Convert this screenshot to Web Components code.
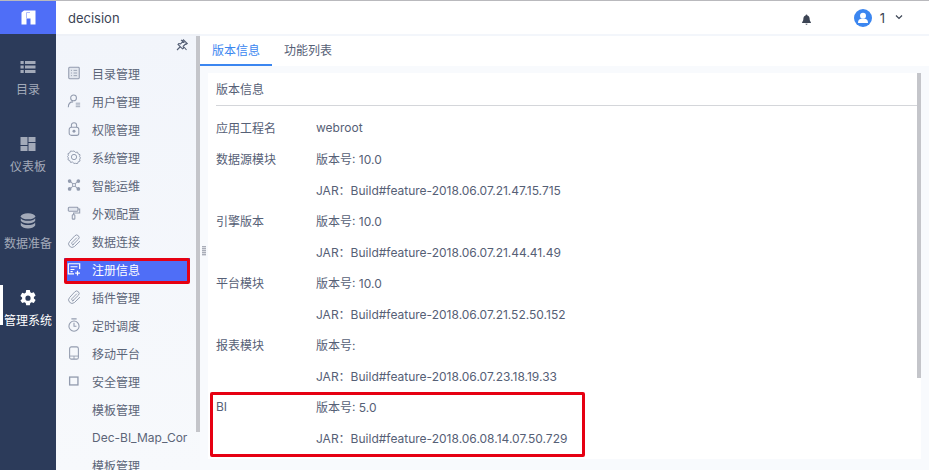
<!DOCTYPE html>
<html lang="zh">
<head>
<meta charset="utf-8">
<title>decision</title>
<style>
  html, body { margin: 0; height: 100%; overflow: hidden; }
  body { font: 12px Inter, "Noto Sans CJK SC", sans-serif; color: #566076; background: #fff; }
</style>
</head>
<body>
<app-shell>
  <top-bar slot="top"></top-bar>
  <nav-rail slot="rail">
    <rail-item icon="list" style="--top:25px">目录</rail-item>
    <rail-item icon="dash">仪表板</rail-item>
    <rail-item icon="db">数据准备</rail-item>
    <rail-item icon="gear" active>管理系统</rail-item>
  </nav-rail>
  <side-menu slot="menu">
    <menu-item icon="book">目录管理</menu-item>
    <menu-item icon="user">用户管理</menu-item>
    <menu-item icon="lock">权限管理</menu-item>
    <menu-item icon="cog">系统管理</menu-item>
    <menu-item icon="nodes">智能运维</menu-item>
    <menu-item icon="roller">外观配置</menu-item>
    <menu-item icon="clip">数据连接</menu-item>
    <menu-item icon="reg" active>注册信息</menu-item>
    <menu-item icon="clip">插件管理</menu-item>
    <menu-item icon="timer">定时调度</menu-item>
    <menu-item icon="phone">移动平台</menu-item>
    <menu-item icon="square">安全管理</menu-item>
    <menu-item>模板管理</menu-item>
    <menu-item>Dec-BI_Map_Cor</menu-item>
    <menu-item>模板管理</menu-item>
  </side-menu>
  <tab-bar slot="tabs"></tab-bar>
  <info-panel slot="panel" heading="版本信息">
    <info-row label="应用工程名">webroot</info-row>
    <info-row label="数据源模块">版本号: 10.0</info-row>
    <info-row>JAR：Build#feature-2018.06.07.21.47.15.715</info-row>
    <info-row label="引擎版本">版本号: 10.0</info-row>
    <info-row>JAR：Build#feature-2018.06.07.21.44.41.49</info-row>
    <info-row label="平台模块">版本号: 10.0</info-row>
    <info-row>JAR：Build#feature-2018.06.07.21.52.50.152</info-row>
    <info-row label="报表模块">版本号:</info-row>
    <info-row>JAR：Build#feature-2018.06.07.23.18.19.33</info-row>
    <info-row label="BI">版本号: 5.0</info-row>
    <info-row>JAR：Build#feature-2018.06.08.14.07.50.729</info-row>
  </info-panel>
  <drag-handle slot="marks" style="left:202px;top:246px"></drag-handle>
  <mark-box slot="marks" style="left:64px;top:258px;width:126px;height:26px"></mark-box>
  <mark-box slot="marks" style="left:210px;top:392px;width:375px;height:65px"></mark-box>
</app-shell>

<script>
// icon paths, all on a 16x16 box
const ICONS = {
  book: '<rect x="2" y="1.500" width="12" height="13" rx="1" fill="#e3e7ef" stroke="currentColor" stroke-width="1.200"/><path d="M4.500 5h1.200M4.500 8h1.200M4.500 11h1.200M7.500 5h4M7.500 8h4M7.500 11h4" stroke="currentColor"/>',
  user: '<circle cx="7.500" cy="4.500" r="3.300" fill="none" stroke="currentColor" stroke-width="1.200"/><path d="M1.500 15c0-3.500 2-6 5.500-6" fill="none" stroke="currentColor" stroke-width="1.200"/><path d="M10 10.500h5M10 12.500h5M10 14.500h5" stroke="currentColor"/>',
  lock: '<rect x="2.500" y="6" width="11" height="9.300" rx="2.500" fill="none" stroke="currentColor" stroke-width="1.200"/><path d="M5 6V3.800a3 3 0 0 1 6 0V6" fill="none" stroke="currentColor" stroke-width="1.200"/><circle cx="8" cy="10.500" r="1.700" fill="currentColor"/>',
  cog: '<path d="M8 .8l1.700 1.700 2.300-.3.800 2.100 2.100 1-.5 2.300 1.100 1.400-1.100 1.400.5 2.300-2.100.9-.8 2.200-2.300-.4L8 15.500l-1.700-1.600-2.300.4-.8-2.200-2.100-.9.500-2.300L.5 7.500l1.100-1.300-.5-2.200 2.100-1 .8-2.100 2.300.3z" transform="translate(0 .3) scale(1 .97)" fill="none" stroke="currentColor" stroke-width="1.100"/><circle cx="8" cy="8" r="3" fill="none" stroke="currentColor" stroke-width="1.100"/>',
  nodes: '<path d="M4 4l8 8M12 4l-8 8" stroke="currentColor" stroke-width="1.200"/><circle cx="3" cy="3.500" r="2.100" fill="currentColor"/><circle cx="13" cy="3.500" r="2.100" fill="currentColor"/><circle cx="3" cy="12.500" r="2.100" fill="currentColor"/><circle cx="13" cy="12.500" r="2.100" fill="currentColor"/><circle cx="8" cy="8" r="1.800" fill="#f3f6fb" stroke="currentColor"/>',
  roller: '<rect x="1.500" y="1.500" width="11" height="4.500" rx="1" fill="#e3e7ef" stroke="currentColor" stroke-width="1.200"/><path d="M12.500 3.500H14.500V8H7.500V10" fill="none" stroke="currentColor" stroke-width="1.200"/><rect x="6" y="10" width="3" height="5" rx=".8" fill="none" stroke="currentColor" stroke-width="1.200"/>',
  clip: '<path d="M6.500 12.500L13 6a2.800 2.800 0 0 0-4-4L3 8.500a4 4 0 0 0 5.500 5.800L14.500 8.500M11 4.500L5.500 10a1.500 1.500 0 0 0 2 2" fill="none" stroke="currentColor" stroke-width="1.100" stroke-linecap="round"/>',
  reg: '<path d="M8 13.500H1.500V2H14.500V8" fill="none" stroke="currentColor" stroke-width="1.400"/><path d="M4 5.500h8M4 8.500h4.500M4 11h2.500" stroke="currentColor" stroke-width="1.200"/><path d="M12 10v5.500M9.300 12.700h5.500" stroke="currentColor" stroke-width="1.400"/>',
  timer: '<circle cx="8" cy="9.300" r="5.800" fill="none" stroke="currentColor" stroke-width="1.200"/><path d="M5 1h6M8 5.500V9.500h2.800" fill="none" stroke="currentColor" stroke-width="1.200"/>',
  phone: '<rect x="3" y="1" width="10" height="14" rx="2" fill="none" stroke="currentColor" stroke-width="1.200"/><path d="M3 11.500h10M8 11.500V15" stroke="currentColor"/>',
  square: '<rect x="3" y="3.500" width="9.500" height="9" fill="none" stroke="currentColor" stroke-width="1.500"/>',
  list: '<path d="M.5 2h3.200v3H.5zM.5 6.500h3.200v3H.5zM.5 11h3.200v3H.5zM5 2h10.500v3H5zM5 6.500h10.500v3H5zM5 11h10.500v3H5z" fill="currentColor"/>',
  dash: '<path d="M.5 1h7v8h-7zM8.500 1h7v5h-7zM8.500 7h7v8h-7zM.5 10h7v5h-7z" fill="currentColor"/>',
  db: '<ellipse cx="8" cy="3.300" rx="7.200" ry="3" fill="currentColor"/><path d="M.8 5.200C2 7 5 7.800 8 7.800S14 7 15.200 5.200v2.600C14 9.600 11 10.400 8 10.400S2 9.600.8 7.800zM.8 9.400C2 11.200 5 12 8 12s6-.8 7.200-2.600V12.500C14 14.400 11 15.500 8 15.500s-6-1.100-7.200-3z" fill="currentColor"/>',
  gear: '<path fill-rule="evenodd" d="M6.200 0h3.600l.5 2.200 1.300.8 2.200-.7 1.800 3.100-1.700 1.500v1.500l1.700 1.500-1.800 3.100-2.200-.7-1.300.8-.5 2.200H6.200l-.5-2.200-1.300-.8-2.200.7L.4 10.400 2.100 8.900V7.400L.4 5.900l1.800-3.100 2.200.7 1.300-.8zM8 5.600a2.600 2.600 0 1 0 0 5.200 2.600 2.600 0 0 0 0-5.200z" fill="currentColor"/>'
};

function iconSvg(name, size) {
  return `<svg width="${size}" height="${size}" viewBox="0 0 16 16" aria-hidden="true">${ICONS[name] || ''}</svg>`;
}

class AppShell extends HTMLElement {
  constructor() {
    super();
    const shadow = this.attachShadow({ mode: 'open' });
    shadow.innerHTML = `
      <style>
        :host { display: block; width: 929px; height: 470px; position: relative; overflow: hidden; }
        .top { height: 34px; }
        .body { display: flex; height: 436px; }
        .work { flex: 1; min-width: 0; display: flex; flex-direction: column; background: #f8fafd; }
      </style>
      <div class="top"><slot name="top"></slot></div>
      <div class="body">
        <slot name="rail"></slot>
        <slot name="menu"></slot>
        <div class="work">
          <slot name="tabs"></slot>
          <slot name="panel"></slot>
        </div>
      </div>
      <slot name="marks"></slot>
    `;
  }
}
customElements.define('app-shell', AppShell);

class TopBar extends HTMLElement {
  constructor() {
    super();
    const shadow = this.attachShadow({ mode: 'open' });
    shadow.innerHTML = `
      <style>
        :host { display: flex; height: 34px; box-sizing: border-box; border-top: 1px solid #b9b9bd; background: #fff; align-items: center; color: #3c4454; }
        .logo { width: 56px; height: 33px; background: #4f6ef7; display: flex; align-items: center; justify-content: center; }
        .name { margin-left: 12px; font-size: 13px; flex: 1; }
        .bell { display: flex; margin-right: 42px; margin-top: 3px; }
        .avatar { display: flex; margin-top: 1px; }
        .num { margin-left: 8px; font-size: 13px; }
        .caret { display: flex; margin-left: 10px; margin-right: 26px; margin-top: -2px; }
      </style>
      <div class="logo">
        <svg width="15" height="15" viewBox="0 0 15 15"><path d="M.5 2.500L3 .5H14.500V14.500H9.500V8.500H5.500V14.500H.5z" fill="#fff"/><path d="M5.500 2.500V8.500M9 2.500H5.500" fill="none" stroke="#aebbfb"/></svg>
      </div>
      <div class="name">decision</div>
      <span class="bell"><svg width="11" height="11" viewBox="0 0 12 12"><path d="M6 0.500c.6 0 1 .4 1 1 1.700.5 2.400 1.900 2.400 3.500 0 2 .6 3 1.400 4v.7H1.200V9C2 8 2.600 7 2.600 5c0-1.600.7-3 2.400-3.500 0-.6.400-1 1-1zM4.800 10.500h2.400C7 11.300 6.600 11.700 6 11.700s-1-.4-1.200-1.200z" fill="#3c4454"/></svg></span>
      <span class="avatar"><svg width="18" height="18" viewBox="0 0 18 18"><circle cx="9" cy="9" r="9" fill="#3b86f0"/><circle cx="9" cy="6.800" r="3" fill="#fff"/><path d="M4 14c0-2.500 1-4 3-4.200h4c2 .2 3 1.700 3 4.200z" fill="#fff"/></svg></span>
      <span class="num">1</span>
      <span class="caret"><svg width="8" height="6" viewBox="0 0 8 6"><path d="M1 1.500l3 3 3-3" fill="none" stroke="#3c4454" stroke-width="1.200"/></svg></span>
    `;
  }
}
customElements.define('top-bar', TopBar);

class NavRail extends HTMLElement {
  constructor() {
    super();
    const shadow = this.attachShadow({ mode: 'open' });
    shadow.innerHTML = `
      <style>
        :host { display: flex; flex-direction: column; gap: 38px; width: 56px; height: 100%; flex: none; background: #2c3b5a; }
      </style>
      <slot></slot>
    `;
  }
}
customElements.define('nav-rail', NavRail);

class RailItem extends HTMLElement {
  constructor() {
    super();
    const shadow = this.attachShadow({ mode: 'open' });
    const icon = this.getAttribute('icon');
    shadow.innerHTML = `
      <style>
        :host { display: block; margin-top: var(--top, 0); color: #a3aab9; position: relative; }
        :host([active]) { color: #fff; }
        :host([active]) .bar { display: block; }
        .box { display: flex; flex-direction: column; align-items: center; }
        svg { display: block; margin-bottom: 7px; }
        .label { font-size: 12px; line-height: 16px; white-space: nowrap; }
        .bar { display: none; position: absolute; left: 0; top: -5px; width: 3px; height: 40px; background: #fff; }
      </style>
      <span class="bar"></span>
      <div class="box">${iconSvg(icon, 16)}<span class="label"><slot></slot></span></div>
    `;
  }
}
customElements.define('rail-item', RailItem);

class SideMenu extends HTMLElement {
  constructor() {
    super();
    const shadow = this.attachShadow({ mode: 'open' });
    shadow.innerHTML = `
      <style>
        :host { display: block; width: 144px; height: 100%; flex: none; position: relative; overflow: hidden; background: linear-gradient(#f2f5fb, #f7f9fc); border-top: 2px solid #eef1f7; box-sizing: border-box; }
        .pin { display: flex; justify-content: flex-end; height: 23px; padding: 3px 12px 0 0; box-sizing: border-box; color: #566076; }
        .list { width: 140px; }
        .thumb { position: absolute; right: 0; top: -2px; width: 4px; height: 398px; background: #c4c5ca; }
      </style>
      <div class="pin">
        <svg width="12" height="12" viewBox="0 0 12 12"><path d="M7.500 .8l3.700 3.700-1.200.8-.5-.3L7.200 7.300l.3 1.900-1 .7L2 5.500l.8-1 1.800.3L6.900 2.500l-.3-.6zM4 8L1 11M8 8L10.500 11M8.500 3.500L5 1" fill="none" stroke="currentColor" stroke-width="1.100"/></svg>
      </div>
      <div class="list"><slot></slot></div>
      <div class="thumb"></div>
    `;
  }
}
customElements.define('side-menu', SideMenu);

class MenuItem extends HTMLElement {
  constructor() {
    super();
    const shadow = this.attachShadow({ mode: 'open' });
    const icon = this.getAttribute('icon');
    shadow.innerHTML = `
      <style>
        :host { display: flex; align-items: center; height: 28px; color: #5c6578; white-space: nowrap; }
        :host([active]) { color: #fff; }
        :host([active]) .row { background: linear-gradient(#4f6ef7, #4f6ef7) 0 1px / 100% 100% no-repeat; }
        .row { display: flex; align-items: center; width: 126px; height: 24px; margin-left: 8px; padding-left: 3px; box-sizing: border-box; }
        .icon { width: 14px; height: 14px; flex: none; margin-right: 11px; color: #929bae; }
        :host([active]) .icon { color: #fff; }
        svg { display: block; }
      </style>
      <div class="row"><span class="icon">${icon ? iconSvg(icon, 14) : ''}</span><span><slot></slot></span></div>
    `;
  }
}
customElements.define('menu-item', MenuItem);

class TabBar extends HTMLElement {
  constructor() {
    super();
    const shadow = this.attachShadow({ mode: 'open' });
    shadow.innerHTML = `
      <style>
        :host { display: flex; height: 32px; box-sizing: border-box; border-top: 2px solid #f3f6fb; flex: none; background: #fff; }
        .tab { width: 72px; box-sizing: border-box; height: 30px; display: flex; align-items: center; justify-content: center; color: #566076; padding-bottom: 4px; }
        .tab.on { color: #3b86f0; border-bottom: 2px solid #3b86f0; padding-bottom: 2px; }
      </style>
      <div class="tab on">版本信息</div>
      <div class="tab">功能列表</div>
    `;
  }
}
customElements.define('tab-bar', TabBar);

class InfoPanel extends HTMLElement {
  constructor() {
    super();
    const shadow = this.attachShadow({ mode: 'open' });
    const heading = this.getAttribute('heading') || '';
    shadow.innerHTML = `
      <style>
        :host { display: block; margin: 7px 8px 11px; background: #fff; flex: 1; min-height: 0; position: relative; overflow: hidden; }
        .inner { padding: 0 4px 0 8px; }
        h2 { margin: 0 0 6px; font: inherit; height: 32px; line-height: 34px; border-bottom: 1px solid #d4d6da; }
        .thumb { position: absolute; right: 0; top: 0; width: 4px; height: 305px; background: #c4c5ca; }
      </style>
      <div class="inner">
        <h2>${heading}</h2>
        <slot></slot>
      </div>
      <div class="thumb"></div>
    `;
  }
}
customElements.define('info-panel', InfoPanel);

class InfoRow extends HTMLElement {
  constructor() {
    super();
    const shadow = this.attachShadow({ mode: 'open' });
    const label = this.getAttribute('label') || '';
    shadow.innerHTML = `
      <style>
        :host { display: flex; height: 31px; align-items: center; white-space: nowrap; }
        .label { width: 100px; flex: none; }
      </style>
      <span class="label">${label}</span>
      <span><slot></slot></span>
    `;
  }
}
customElements.define('info-row', InfoRow);

class DragHandle extends HTMLElement {
  constructor() {
    super();
    const shadow = this.attachShadow({ mode: 'open' });
    shadow.innerHTML = `
      <style>
        :host { display: block; position: absolute; width: 4px; height: 10px; background: repeating-linear-gradient(#a9adb8 0 1px, #d9dbe1 1px 2px); }
      </style>
    `;
  }
}
customElements.define('drag-handle', DragHandle);

class MarkBox extends HTMLElement {
  constructor() {
    super();
    const shadow = this.attachShadow({ mode: 'open' });
    shadow.innerHTML = `
      <style>
        :host { display: block; position: absolute; box-sizing: border-box; border: 3px solid #e60012; border-radius: 2px; pointer-events: none; }
      </style>
    `;
  }
}
customElements.define('mark-box', MarkBox);
</script>
</body>
</html>
